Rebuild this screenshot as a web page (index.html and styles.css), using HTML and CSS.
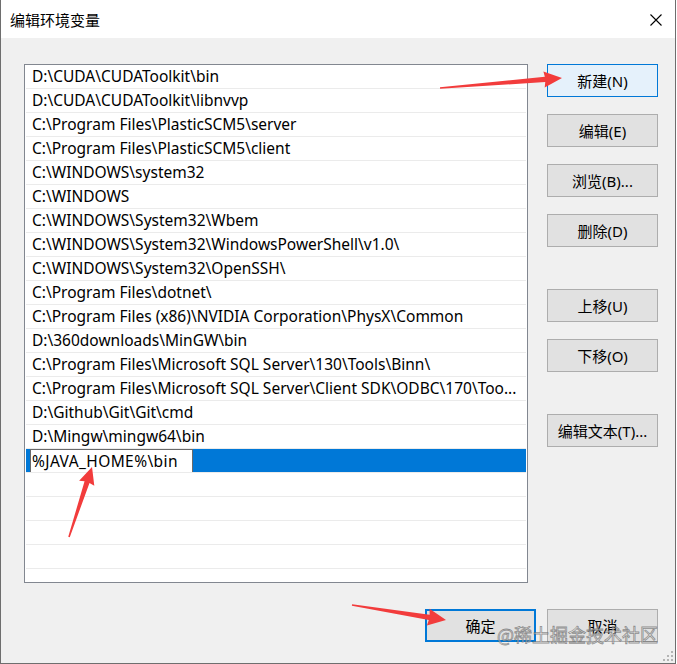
FILE: index.html
```html
<!DOCTYPE html>
<html lang="zh-CN">
<head>
<meta charset="utf-8">
<title>编辑环境变量</title>
<link rel="stylesheet" href="styles.css">
</head>
<body>
<div class="window">
  <div class="titlebar">
    <span class="title">编辑环境变量</span>
    <svg class="close" width="12" height="12" viewBox="0 0 12 12"><path d="M0.5 0.5 L11.5 11.5 M11.5 0.5 L0.5 11.5" stroke="#000" stroke-width="1.1" fill="none"/></svg>
  </div>
  <div class="content">
    <div class="main">
      <div class="list">
        <div class="row">D:\CUDA\CUDAToolkit\bin</div>
        <div class="row">D:\CUDA\CUDAToolkit\libnvvp</div>
        <div class="row">C:\Program Files\PlasticSCM5\server</div>
        <div class="row">C:\Program Files\PlasticSCM5\client</div>
        <div class="row">C:\WINDOWS\system32</div>
        <div class="row">C:\WINDOWS</div>
        <div class="row">C:\WINDOWS\System32\Wbem</div>
        <div class="row">C:\WINDOWS\System32\WindowsPowerShell\v1.0\</div>
        <div class="row">C:\WINDOWS\System32\OpenSSH\</div>
        <div class="row">C:\Program Files\dotnet\</div>
        <div class="row">C:\Program Files (x86)\NVIDIA Corporation\PhysX\Common</div>
        <div class="row">D:\360downloads\MinGW\bin</div>
        <div class="row">C:\Program Files\Microsoft SQL Server\130\Tools\Binn\</div>
        <div class="row">C:\Program Files\Microsoft SQL Server\Client SDK\ODBC\170\Too...</div>
        <div class="row">D:\Github\Git\Git\cmd</div>
        <div class="row">D:\Mingw\mingw64\bin</div>
        <div class="row selected"><span class="edit">%JAVA_HOME%\bin</span></div>
        <div class="row"></div>
        <div class="row"></div>
        <div class="row"></div>
        <div class="row"></div>
        <div class="row"></div>
      </div>
      <div class="side">
        <div class="btn focus">新建(N)</div>
        <div class="btn">编辑(E)</div>
        <div class="btn">浏览(B)...</div>
        <div class="btn">删除(D)</div>
        <div class="btn group">上移(U)</div>
        <div class="btn">下移(O)</div>
        <div class="btn group">编辑文本(T)...</div>
      </div>
    </div>
    <div class="footer">
      <div class="btn default">确定</div>
      <div class="btn">取消</div>
    </div>
  </div>
  <div class="watermark">@稀土掘金技术社区</div>
  <svg class="grip" width="12" height="12" viewBox="0 0 12 12">
    <rect x="9" y="1" width="2" height="2" fill="#b4b4b4"/>
    <rect x="5" y="5" width="2" height="2" fill="#b4b4b4"/>
    <rect x="9" y="5" width="2" height="2" fill="#b4b4b4"/>
    <rect x="1" y="9" width="2" height="2" fill="#b4b4b4"/>
    <rect x="5" y="9" width="2" height="2" fill="#b4b4b4"/>
    <rect x="9" y="9" width="2" height="2" fill="#b4b4b4"/>
  </svg>
  <svg class="annot" width="677" height="664" viewBox="0 0 677 664">
    <g fill="#f23c3c">
      <polygon transform="translate(440 88) rotate(-4.69)" points="0,-0.8 105.4,-2.6 104.4,-8 122.4,0 104.4,8 105.4,2.6 0,0.8"/>
      <polygon transform="translate(69 537) rotate(-71.8)" points="0,-0.8 57.7,-2.6 56.7,-8 73.7,0 56.7,8 57.7,2.6 0,0.8"/>
      <polygon transform="translate(352 605) rotate(9.1)" points="0,-0.8 78.2,-2.6 77.2,-8.5 95.2,0 77.2,8.5 78.2,2.6 0,0.8"/>
    </g>
  </svg>
</div>
</body>
</html>
```
FILE: styles.css
```css
html, body {
  margin: 0;
  padding: 0;
  background: #ffffff;
}

.window {
  position: relative;
  width: 676px;
  height: 664px;
  box-sizing: border-box;
  border: 1px solid #6e6e6e;
  border-top: none;
  background: #f0f0f0;
  font-family: "Noto Sans", "Noto Sans CJK SC", sans-serif;
  color: #000;
  overflow: hidden;
}

.titlebar {
  height: 38px;
  background: #ffffff;
  display: flex;
  align-items: center;
  justify-content: space-between;
  padding: 0 13px 0 9px;
  box-sizing: border-box;
}

.title {
  font-family: "Noto Sans CJK SC", sans-serif;
  font-size: 15px;
  line-height: 20px;
  margin-top: 1px;
}

.close {
  display: block;
  margin-top: 1px;
}

.content {
  padding: 26px 17px 0 23px;
}

.main {
  display: flex;
  gap: 19px;
}

.list {
  width: 504px;
  height: 519px;
  box-sizing: border-box;
  border: 1px solid #828790;
  background: #ffffff;
  padding: 0 1px;
  overflow: hidden;
}

.row {
  height: 23px;
  line-height: 23px;
  border-bottom: 1px solid #ebebeb;
  padding-left: 6px;
  font-size: 15.5px;
  white-space: nowrap;
  overflow: hidden;
}

.row.selected {
  background: #0078d7;
  padding-left: 4px;
}

.edit {
  display: inline-block;
  box-sizing: border-box;
  width: 163px;
  height: 24px;
  line-height: 22px;
  border: 1px solid #6a6a6a;
  background: #ffffff;
  padding-left: 1px;
  vertical-align: top;
  letter-spacing: 0.4px;
}

.side {
  display: flex;
  flex-direction: column;
  gap: 17px;
}

.btn {
  box-sizing: border-box;
  width: 111px;
  height: 33px;
  border: 1px solid #adadad;
  background: #e1e1e1;
  display: flex;
  align-items: center;
  justify-content: center;
  font-size: 15px;
  font-family: "Noto Sans", "Noto Sans CJK SC", sans-serif;
  white-space: nowrap;
}

.btn.group {
  margin-top: 25px;
}

.btn.focus {
  background: #e5f1fb;
  border-color: #0078d7;
}

.btn.default {
  border: 2px solid #0078d7;
}

.footer {
  display: flex;
  justify-content: flex-end;
  gap: 11px;
  margin-top: 26px;
}

.watermark {
  position: absolute;
  left: 496px;
  top: 624px;
  font-family: "Noto Sans CJK SC", sans-serif;
  font-size: 18px;
  line-height: 20px;
  color: rgba(255, 255, 255, 0.5);
  -webkit-text-stroke: 0.8px rgba(100, 100, 100, 0.7);
  white-space: nowrap;
}

.grip {
  position: absolute;
  left: 661px;
  top: 650px;
}

.annot {
  position: absolute;
  left: -1px;
  top: 0;
  pointer-events: none;
}
```
